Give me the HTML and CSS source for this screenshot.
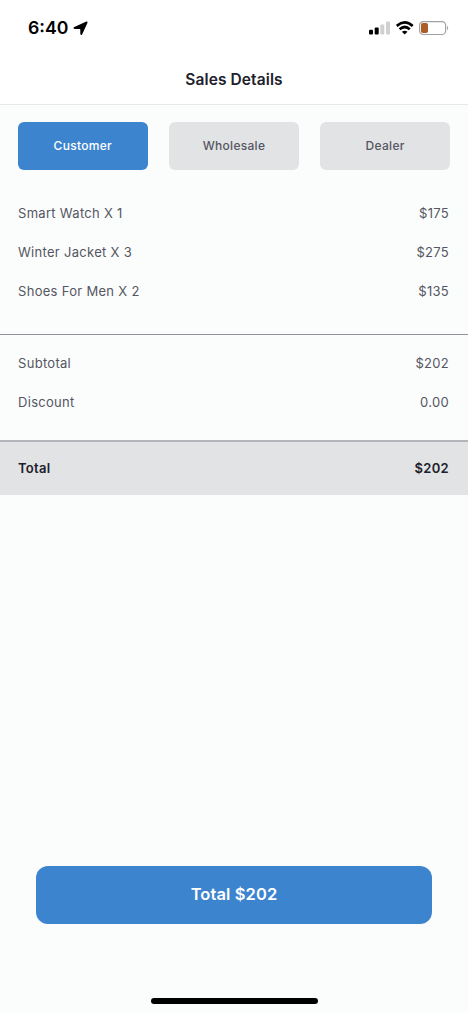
FILE: index.html
```html
<!DOCTYPE html>
<html lang="en">
<head>
<meta charset="utf-8">
<title>Sales Details</title>
<link rel="stylesheet" href="styles.css">
</head>
<body>
<div class="screen">
  <header class="status">
    <div class="clock"><span class="time">6:40</span>
      <svg class="location" width="15" height="15" viewBox="0 0 15 15"><path d="M12.8.7Q15-.2 14.4 2L9.2 13.2Q8 15.2 7.3 12.7V8.4Q7.3 7.9 6.8 7.9H1.8Q-.8 7.3 1.4 6Z"/></svg>
    </div>
    <div class="indicators">
      <svg width="22" height="14" viewBox="0 0 22 14"><rect x="0" y="8.7" width="4" height="4.8" rx="1"/><rect x="5.7" y="6.4" width="4" height="7.1" rx="1"/><g fill="#d0d0d1"><rect x="11.3" y="3.4" width="4" height="10.1" rx="1"/><rect x="17" y=".6" width="4" height="12.9" rx="1"/></g></svg>
      <svg width="18" height="14" viewBox="0 0 18 14"><g fill="none" stroke="#000" stroke-width="2.7"><path d="M.7 4.9Q8.7-2 16.7 4.9M3.6 8.2Q8.7 3.8 13.8 8.2"/></g><path d="M5.9 10.7Q8.7 8.7 11.5 10.7L8.7 13.6Z"/></svg>
      <svg width="31" height="15" viewBox="0 0 31 15"><rect x=".6" y=".6" width="26" height="12.9" rx="3.6" fill="none" stroke="#a0a2a5" stroke-width="1.2"/><rect x="2" y="2" width="7" height="10" rx="1.8" fill="#ac5e29"/><path d="M28 4.8Q30.4 7 28 9.2Z" fill="#a0a2a5"/></svg>
    </div>
  </header>
  <h1 class="title">Sales Details</h1>
  <nav class="tabs"><button class="tab active">Customer</button><button class="tab">Wholesale</button><button class="tab">Dealer</button></nav>
  <section class="items">
    <div class="row"><span>Smart Watch X 1</span><span>$175</span></div>
    <div class="row"><span>Winter Jacket X 3</span><span>$275</span></div>
    <div class="row"><span>Shoes For Men X 2</span><span>$135</span></div>
  </section>
  <section class="summary">
    <div class="row"><span>Subtotal</span><span>$202</span></div>
    <div class="row"><span>Discount</span><span>0.00</span></div>
  </section>
  <div class="row total"><span>Total</span><span>$202</span></div>
  <footer class="footer"><button class="pay">Total $202</button><div class="home"></div></footer>
</div>
</body>
</html>
```
FILE: styles.css
```css
* { box-sizing: border-box; }
body { margin: 0; font-family: Inter, sans-serif; background: #fbfdfd; color: #20212b; }
button { border: 0; padding: 0; font-family: inherit; }
.screen { height: 1013px; display: flex; flex-direction: column; }
.status { height: 56px; background: #fff; display: flex; justify-content: space-between; padding: 0 18px 0 28px; align-items: center; }
.clock, .indicators { display: flex; align-items: center; }
.clock { gap: 5px; }
.time { font-size: 17.7px; font-weight: 600; line-height: 22px; color: #000; }
.indicators { gap: 5px; }
.title { margin: 0; height: 49px; background: #fff; border-bottom: 1px solid #e5e9ea; text-align: center; font-size: 15.5px; font-weight: 600; line-height: 47px; letter-spacing: .1px; }
.tabs { display: grid; grid-template-columns: repeat(3, 1fr); gap: 21.5px; padding: 17px 18px 0; }
.tab { height: 47.5px; border-radius: 6px; background: #e2e3e5; color: #555661; font-size: 12px; font-weight: 500; letter-spacing: .3px; }
.active { background: #3d84cf; color: #fff; }
.items { height: 165.5px; padding-top: 23.5px; border-bottom: 1px solid #9092a0; }
.row { height: 39px; padding: 0 19px 0 18px; display: flex; justify-content: space-between; align-items: center; font-size: 13px; color: #555661; letter-spacing: .3px; }
.summary { height: 105px; padding-top: 8px; }
.total { height: 54.5px; border-top: 2px solid #b3b5bb; background: #e2e3e5; color: #20212b; font-weight: 600; }
.footer { margin-top: auto; height: 147px; display: flex; flex-direction: column; align-items: center; justify-content: space-between; padding: 0 36px 9px; }
.pay { width: 100%; height: 57.5px; padding-bottom: 1px; background: #3d84cf; color: #fff; border-radius: 12px; font-size: 16.5px; font-weight: 600; letter-spacing: .1px; }
.home { width: 167px; height: 6px; border-radius: 3px; background: #000; }
```
